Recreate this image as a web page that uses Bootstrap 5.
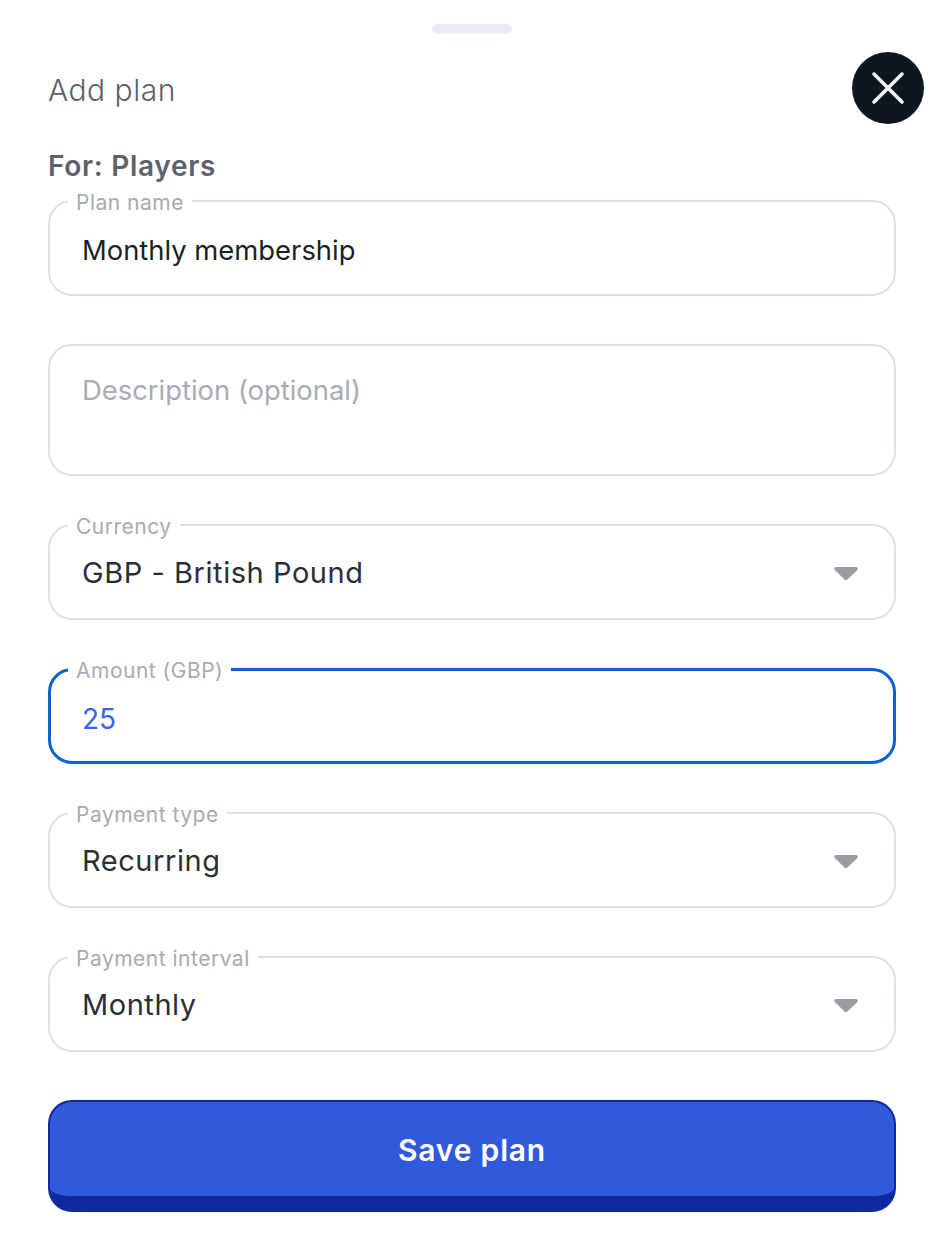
<!DOCTYPE html>
<html lang="en">
<head>
<meta charset="utf-8">
<title>Add plan</title>
<link href="https://cdn.jsdelivr.net/npm/bootstrap@5.3.0/dist/css/bootstrap.min.css" rel="stylesheet">
<style>
body{background:#fff;font-family:"Inter","Liberation Sans",sans-serif;color:#1c1f26;}
.sheet{padding:20px 48px 0;}
.grab{width:80px;height:10px;border-radius:5px;background:#ecedf4;}
.grab-row{margin-bottom:18px;}
.sheet-title{font-size:30px;line-height:36px;font-weight:300;color:#5d5f6b;letter-spacing:.5px;margin:0;padding-top:4px;}
.close-round{width:72px;height:72px;border:0;border-radius:50%;background:#0e161f;margin-right:-28px;padding:0;}
.for-line{font-size:28px;line-height:32px;font-weight:600;color:#5e616d;letter-spacing:.7px;margin:26px 0 18px;}
.plan-form{gap:48px;}
.fld{border:2px solid #dfe0e7;border-radius:24px;padding:0 32px 7px;margin:0;min-width:0;background:#fff;}
.fld-top{margin-top:-11px;}
.fld-plain{padding-top:26px;padding-bottom:0;height:132px;}
.fld legend{float:none;width:auto;font-size:21px;line-height:20px;color:#a8aab4;padding:4px 8px 0;margin:0 0 0 -14px;font-weight:400;letter-spacing:.5px;}
.fld .form-control,.fld .form-select{border:0;border-radius:0;padding:0;height:74px;font-size:27.4px;color:#1c1f26;background-color:transparent;box-shadow:none;font-family:inherit;}
.fld .form-select{font-size:29px;letter-spacing:.55px;height:72px;margin-bottom:2px;color:#2b2e36;background-image:url("data:image/svg+xml,%3Csvg xmlns='http://www.w3.org/2000/svg' viewBox='0 0 24 13'%3E%3Cpath fill='%239b9ca6' d='M2 0h20c1.6 0 2.4 1.800 1.300 3L13.400 12.400c-.8.800-2 .800-2.800 0L.7 3C-.4 1.800.4 0 2 0z'/%3E%3C/svg%3E");background-repeat:no-repeat;background-position:right 4px center;background-size:24px 13px;}
.fld textarea.form-control{height:90px;resize:none;line-height:36px;}
.fld .form-control::placeholder{color:#a9abb4;opacity:1;}
.fld-active{border:3px solid #0a62d2;padding-left:31px;padding-right:31px;padding-bottom:6px;}
.fld-active .form-control{color:#3b62ea;font-size:28px;height:74px;padding-top:2px;}
.save-btn{height:112px;border:2px solid #10299f;border-bottom-width:16px;border-radius:24px;background:#3159dc;color:#fff;font-size:30px;font-weight:600;letter-spacing:.8px;padding:3px 0 0;}
.save-btn:hover,.save-btn:active{background:#3159dc;color:#fff;border-color:#10299f;}
</style>
</head>
<body>
<div class="sheet">
  <div class="grab-row d-flex justify-content-center mt-1"><div class="grab"></div></div>
  <div class="d-flex justify-content-between align-items-center">
    <h1 class="sheet-title">Add plan</h1>
    <button type="button" class="close-round d-flex align-items-center justify-content-center" aria-label="Close">
      <svg width="34" height="34" viewBox="0 0 34 34" aria-hidden="true"><path d="M3 3L31 31M31 3L3 31" stroke="#fff" stroke-width="3.500" stroke-linecap="round" fill="none"/></svg>
    </button>
  </div>
  <div class="for-line">For: Players</div>
  <form class="plan-form d-flex flex-column">
    <fieldset class="fld fld-top">
      <legend>Plan name</legend>
      <input class="form-control" type="text" value="Monthly membership" aria-label="Plan name">
    </fieldset>
    <fieldset class="fld fld-plain">
      <textarea class="form-control" placeholder="Description (optional)" aria-label="Description"></textarea>
    </fieldset>
    <fieldset class="fld fld-top">
      <legend>Currency</legend>
      <select class="form-select" aria-label="Currency"><option>GBP - British Pound</option></select>
    </fieldset>
    <fieldset class="fld fld-top fld-active">
      <legend>Amount (GBP)</legend>
      <input class="form-control" type="text" value="25" aria-label="Amount">
    </fieldset>
    <fieldset class="fld fld-top">
      <legend>Payment type</legend>
      <select class="form-select" aria-label="Payment type"><option>Recurring</option></select>
    </fieldset>
    <fieldset class="fld fld-top">
      <legend>Payment interval</legend>
      <select class="form-select" aria-label="Payment interval"><option>Monthly</option></select>
    </fieldset>
    <button type="button" class="btn save-btn w-100">Save plan</button>
  </form>
</div>
<script src="https://cdn.jsdelivr.net/npm/bootstrap@5.3.0/dist/js/bootstrap.bundle.min.js"></script>
</body>
</html>
